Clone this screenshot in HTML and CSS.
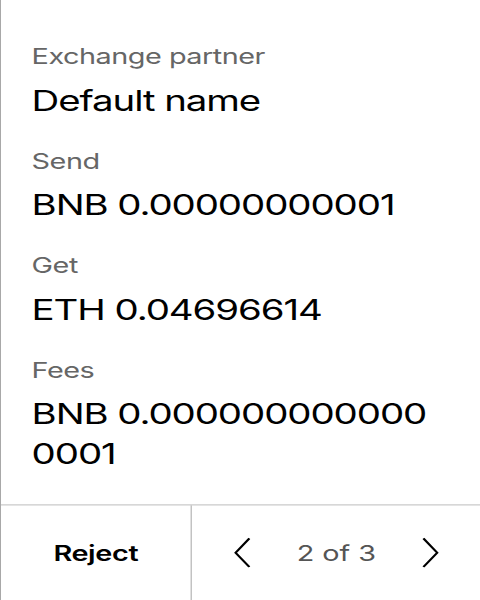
FILE: index.html
```html
<!DOCTYPE html>
<html>
<head>
<meta charset="utf-8">
<link rel="stylesheet" href="styles.css">
</head>
<body>
<div class="viewport">
  <div class="screen">
    <div class="details">
      <div class="field">
        <div class="label">Exchange partner</div>
        <div class="value">Default name</div>
      </div>
      <div class="field">
        <div class="label">Send</div>
        <div class="value">BNB 0.00000000001</div>
      </div>
      <div class="field">
        <div class="label">Get</div>
        <div class="value">ETH 0.04696614</div>
      </div>
      <div class="field">
        <div class="label">Fees</div>
        <div class="value">BNB 0.0000000000000001</div>
      </div>
    </div>
    <div class="footer">
      <div class="reject">Reject</div>
      <div class="pager">
        <svg class="chev" width="14" height="34" viewBox="0 0 14 34"><path d="M13 1 L1.5 17 L13 33" fill="none" stroke="#000" stroke-width="2"/></svg>
        <span class="count">2 of 3</span>
        <svg class="chev" width="14" height="34" viewBox="0 0 14 34"><path d="M1 1 L12.5 17 L1 33" fill="none" stroke="#000" stroke-width="2"/></svg>
      </div>
    </div>
  </div>
</div>
</body>
</html>
```
FILE: styles.css
```css
html, body {
  margin: 0;
  padding: 0;
  background: #fff;
}
body {
  font-family: Inter, "Noto Sans", sans-serif;
  color: #000;
}
.viewport {
  width: 480px;
  height: 600px;
  box-sizing: border-box;
  border-left: 1px solid #a8a8a8;
  overflow: hidden;
}
/* device canvas is 400x672, shown stretched to 480x600 */
.screen {
  width: 400px;
  height: 672px;
  display: flex;
  flex-direction: column;
  transform: scale(1.2, 0.892857);
  transform-origin: 0 0;
}
.details {
  flex: 1;
  padding: 48px 38px 0 25.5px;
  display: flex;
  flex-direction: column;
  gap: 30px;
}
.label {
  font-size: 24px;
  line-height: 32px;
  letter-spacing: -0.4px;
  color: #666;
  margin-bottom: 10px;
}
.value {
  font-size: 32px;
  line-height: 45px;
  letter-spacing: -0.9px;
  word-break: break-all;
}
.footer {
  height: 107px;
  box-sizing: border-box;
  border-top: 1px solid #b4b4b4;
  display: grid;
  grid-template-columns: 159px 1fr;
}
.reject {
  display: flex;
  align-items: center;
  justify-content: center;
  font-size: 24px;
  font-weight: 600;
  letter-spacing: -0.3px;
  border-right: 1px solid #b4b4b4;
}
.pager {
  display: flex;
  align-items: center;
  justify-content: space-between;
  padding: 0 35px 0 35px;
}
.count {
  font-size: 24px;
  color: #555;
}
.chev {
  display: block;
}
```
